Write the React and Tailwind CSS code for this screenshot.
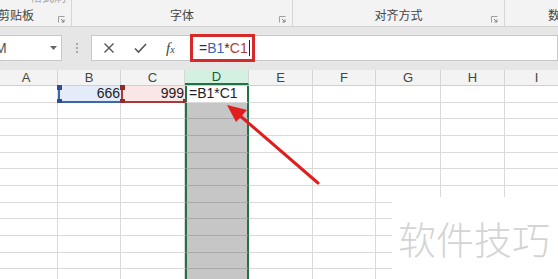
import React from 'react';

const cols = [
  { key: 'A', w: 63 },
  { key: 'B', w: 63 },
  { key: 'C', w: 64 },
  { key: 'D', w: 64 },
  { key: 'E', w: 64 },
  { key: 'F', w: 63 },
  { key: 'G', w: 65 },
  { key: 'H', w: 64 },
  { key: 'I', w: 64 },
];

const rowCount = 12;

// 小方块（引用框的角）
const Handle = ({ className }) => (
  <span className={`absolute w-[5px] h-[5px] ${className}`} />
);

const Launcher = () => (
  <svg width="7" height="7" viewBox="0 0 7 7" className="absolute right-[6px] bottom-[3px]">
    <path d="M0.5 6.5V0.5H6.5" fill="none" stroke="#a0a0a0" strokeWidth="1" />
    <path d="M3 3L6 6M6 3.5V6H3.5" fill="none" stroke="#808080" strokeWidth="1" />
  </svg>
);

const Cell = ({ col, row }) => {
  const base = 'relative shrink-0 h-full border-r border-[#dadada]';
  if (col.key === 'D') {
    if (row === 0) {
      return (
        <div style={{ width: col.w }} className="relative shrink-0 h-full bg-white border-x-2 border-[#217346] border-b border-b-[#dadada] flex items-center pl-[2px] text-[14px] text-[#222]">
          =B1*C1
        </div>
      );
    }
    return (
      <div style={{ width: col.w }} className="relative shrink-0 h-full bg-[#c6c6c6] border-x-2 border-[#217346] border-b border-b-[#a9a9a9]" />
    );
  }
  if (row === 0 && col.key === 'B') {
    return (
      <div style={{ width: col.w }} className="relative shrink-0 h-full bg-[#e3ecf8] border-l-2 border-[#3b67b0] border-b-2 border-b-[#3b67b0] flex items-center justify-end pr-[1px] text-[14px] text-[#222]">
        666
        <Handle className="left-[-3px] top-[-1px] bg-[#2b4f8f]" />
        <Handle className="left-[-3px] bottom-[-3px] bg-[#2b4f8f]" />
      </div>
    );
  }
  if (row === 0 && col.key === 'C') {
    return (
      <div style={{ width: col.w }} className="relative shrink-0 h-full bg-[#fbe6e6] border-l-2 border-[#a83a3a] border-b-2 border-b-[#a83a3a] flex items-center justify-end pr-[1px] text-[14px] text-[#222]">
        999
        <Handle className="left-[-3px] top-[-1px] bg-[#8f2b2b]" />
        <Handle className="left-[-3px] bottom-[-3px] bg-[#8f2b2b]" />
        <Handle className="right-[-3px] bottom-[-3px] bg-[#8f2b2b]" />
      </div>
    );
  }
  return <div style={{ width: col.w }} className={`${base} bg-white border-b border-b-[#dadada]`} />;
};

export default function App() {
  return (
    <div className="relative w-[558px] h-[279px] overflow-hidden bg-white font-['Liberation_Sans','Noto_Sans_CJK_SC',sans-serif]">
      {/* 功能区 */}
      <div className="h-[26px] bg-[#f3f3f3] flex text-[12px] text-[#444] font-['Noto_Sans_CJK_SC',sans-serif]">
        <div className="relative w-[72px] h-full border-r border-[#d6d6d6]">
          <span className="absolute left-[-2px] top-[9px] leading-none">剪贴板</span>
          <span className="absolute left-[30px] top-[-9px] leading-none text-[#aaa]">格式刷</span>
          <Launcher />
        </div>
        <div className="relative w-[221px] h-full border-r border-[#d6d6d6] flex justify-center">
          <span className="mt-[9px] leading-none">字体</span>
          <Launcher />
        </div>
        <div className="relative w-[212px] h-full border-r border-[#d6d6d6] flex justify-center">
          <span className="mt-[9px] leading-none">对齐方式</span>
          <Launcher />
        </div>
        <div className="relative flex-1 h-full">
          <span className="absolute left-[43px] top-[9px] leading-none">数</span>
        </div>
      </div>

      {/* 编辑栏 */}
      <div className="bg-[#e6e6e6] border-t border-[#d2d2d2] pt-[8px] pb-[9px]">
        <div className="h-[26px] flex">
          <div className="w-[62px] h-full bg-white border-y border-r border-[#c8c8c8] flex items-center justify-between pr-[4px]">
            <span className="text-[14px] text-[#555] ml-[-5px]">M</span>
            <svg width="7" height="4" viewBox="0 0 7 4"><path d="M0 0H7L3.5 4Z" fill="#666" /></svg>
          </div>
          <div className="w-[29px] h-full flex flex-col items-center justify-center gap-[2px]">
            <span className="w-[2px] h-[2px] bg-[#a8a8a8]" />
            <span className="w-[2px] h-[2px] bg-[#a8a8a8]" />
            <span className="w-[2px] h-[2px] bg-[#a8a8a8]" />
          </div>
          <div className="flex-1 h-full bg-white border border-[#c8c8c8] flex items-center">
            <div className="w-[98px] h-full flex items-center">
              <svg width="12" height="12" viewBox="0 0 12 12" className="ml-[11px]">
                <path d="M1.5 1.5L10.5 10.5M10.5 1.5L1.5 10.5" stroke="#555" strokeWidth="1.4" />
              </svg>
              <svg width="13" height="12" viewBox="0 0 13 12" className="ml-[19px]">
                <path d="M1 6.5L4.5 10L12 2" fill="none" stroke="#555" strokeWidth="1.6" />
              </svg>
              <span className="ml-[19px] text-[15px] text-[#444] italic font-['Liberation_Serif',serif] leading-none">
                f<span className="text-[10px]">x</span>
              </span>
            </div>
            <div className="relative h-[28px] w-[65px] border-[3px] border-[#d42a2a] flex items-center pl-[6px] text-[14px] leading-none">
              <span className="text-[#333]">=</span>
              <span className="text-[#3b67b0]">B1</span>
              <span className="text-[#333]">*</span>
              <span className="text-[#b23a3a]">C1</span>
              <span className="w-[1px] h-[16px] bg-[#222] ml-[1px]" />
            </div>
          </div>
        </div>
      </div>

      {/* 列标题 */}
      <div className="h-[16px] flex ml-[-5px] bg-[#f3f3f3] border-b border-[#cfcfcf] text-[13px] text-[#444]">
        {cols.map((c) => (
          <div
            key={c.key}
            style={{ width: c.w }}
            className={`shrink-0 h-full flex items-center justify-center border-r border-[#d5d5d5] leading-none ${c.key === 'D' ? 'bg-[#d3f0e0] border-b-2 border-b-[#217346] text-[#1d5c38]' : ''}`}
          >
            {c.key}
          </div>
        ))}
      </div>

      {/* 单元格 */}
      <div className="flex flex-col ml-[-5px]">
        {Array.from({ length: rowCount }).map((_, r) => (
          <div key={r} className="h-[16.67px] flex">
            {cols.map((c) => (
              <Cell key={c.key} col={c} row={r} />
            ))}
          </div>
        ))}
      </div>

      {/* 红色箭头 */}
      <svg width="558" height="279" className="absolute left-0 top-0 pointer-events-none">
        <line x1="318" y1="183" x2="238" y2="114" stroke="#e01e1e" strokeWidth="3" strokeLinecap="round" />
        <polygon points="227,105 247,110 236,122" fill="#e01e1e" />
      </svg>

      {/* 水印 */}
      <div className="absolute left-[392px] top-[197px] w-[166px] h-[82px] bg-white flex items-center pl-[6px]">
        <span className="text-[38px] leading-none text-[#d4d4d4] font-['Noto_Sans_CJK_SC',sans-serif] font-light">软件技巧</span>
      </div>
    </div>
  );
}
